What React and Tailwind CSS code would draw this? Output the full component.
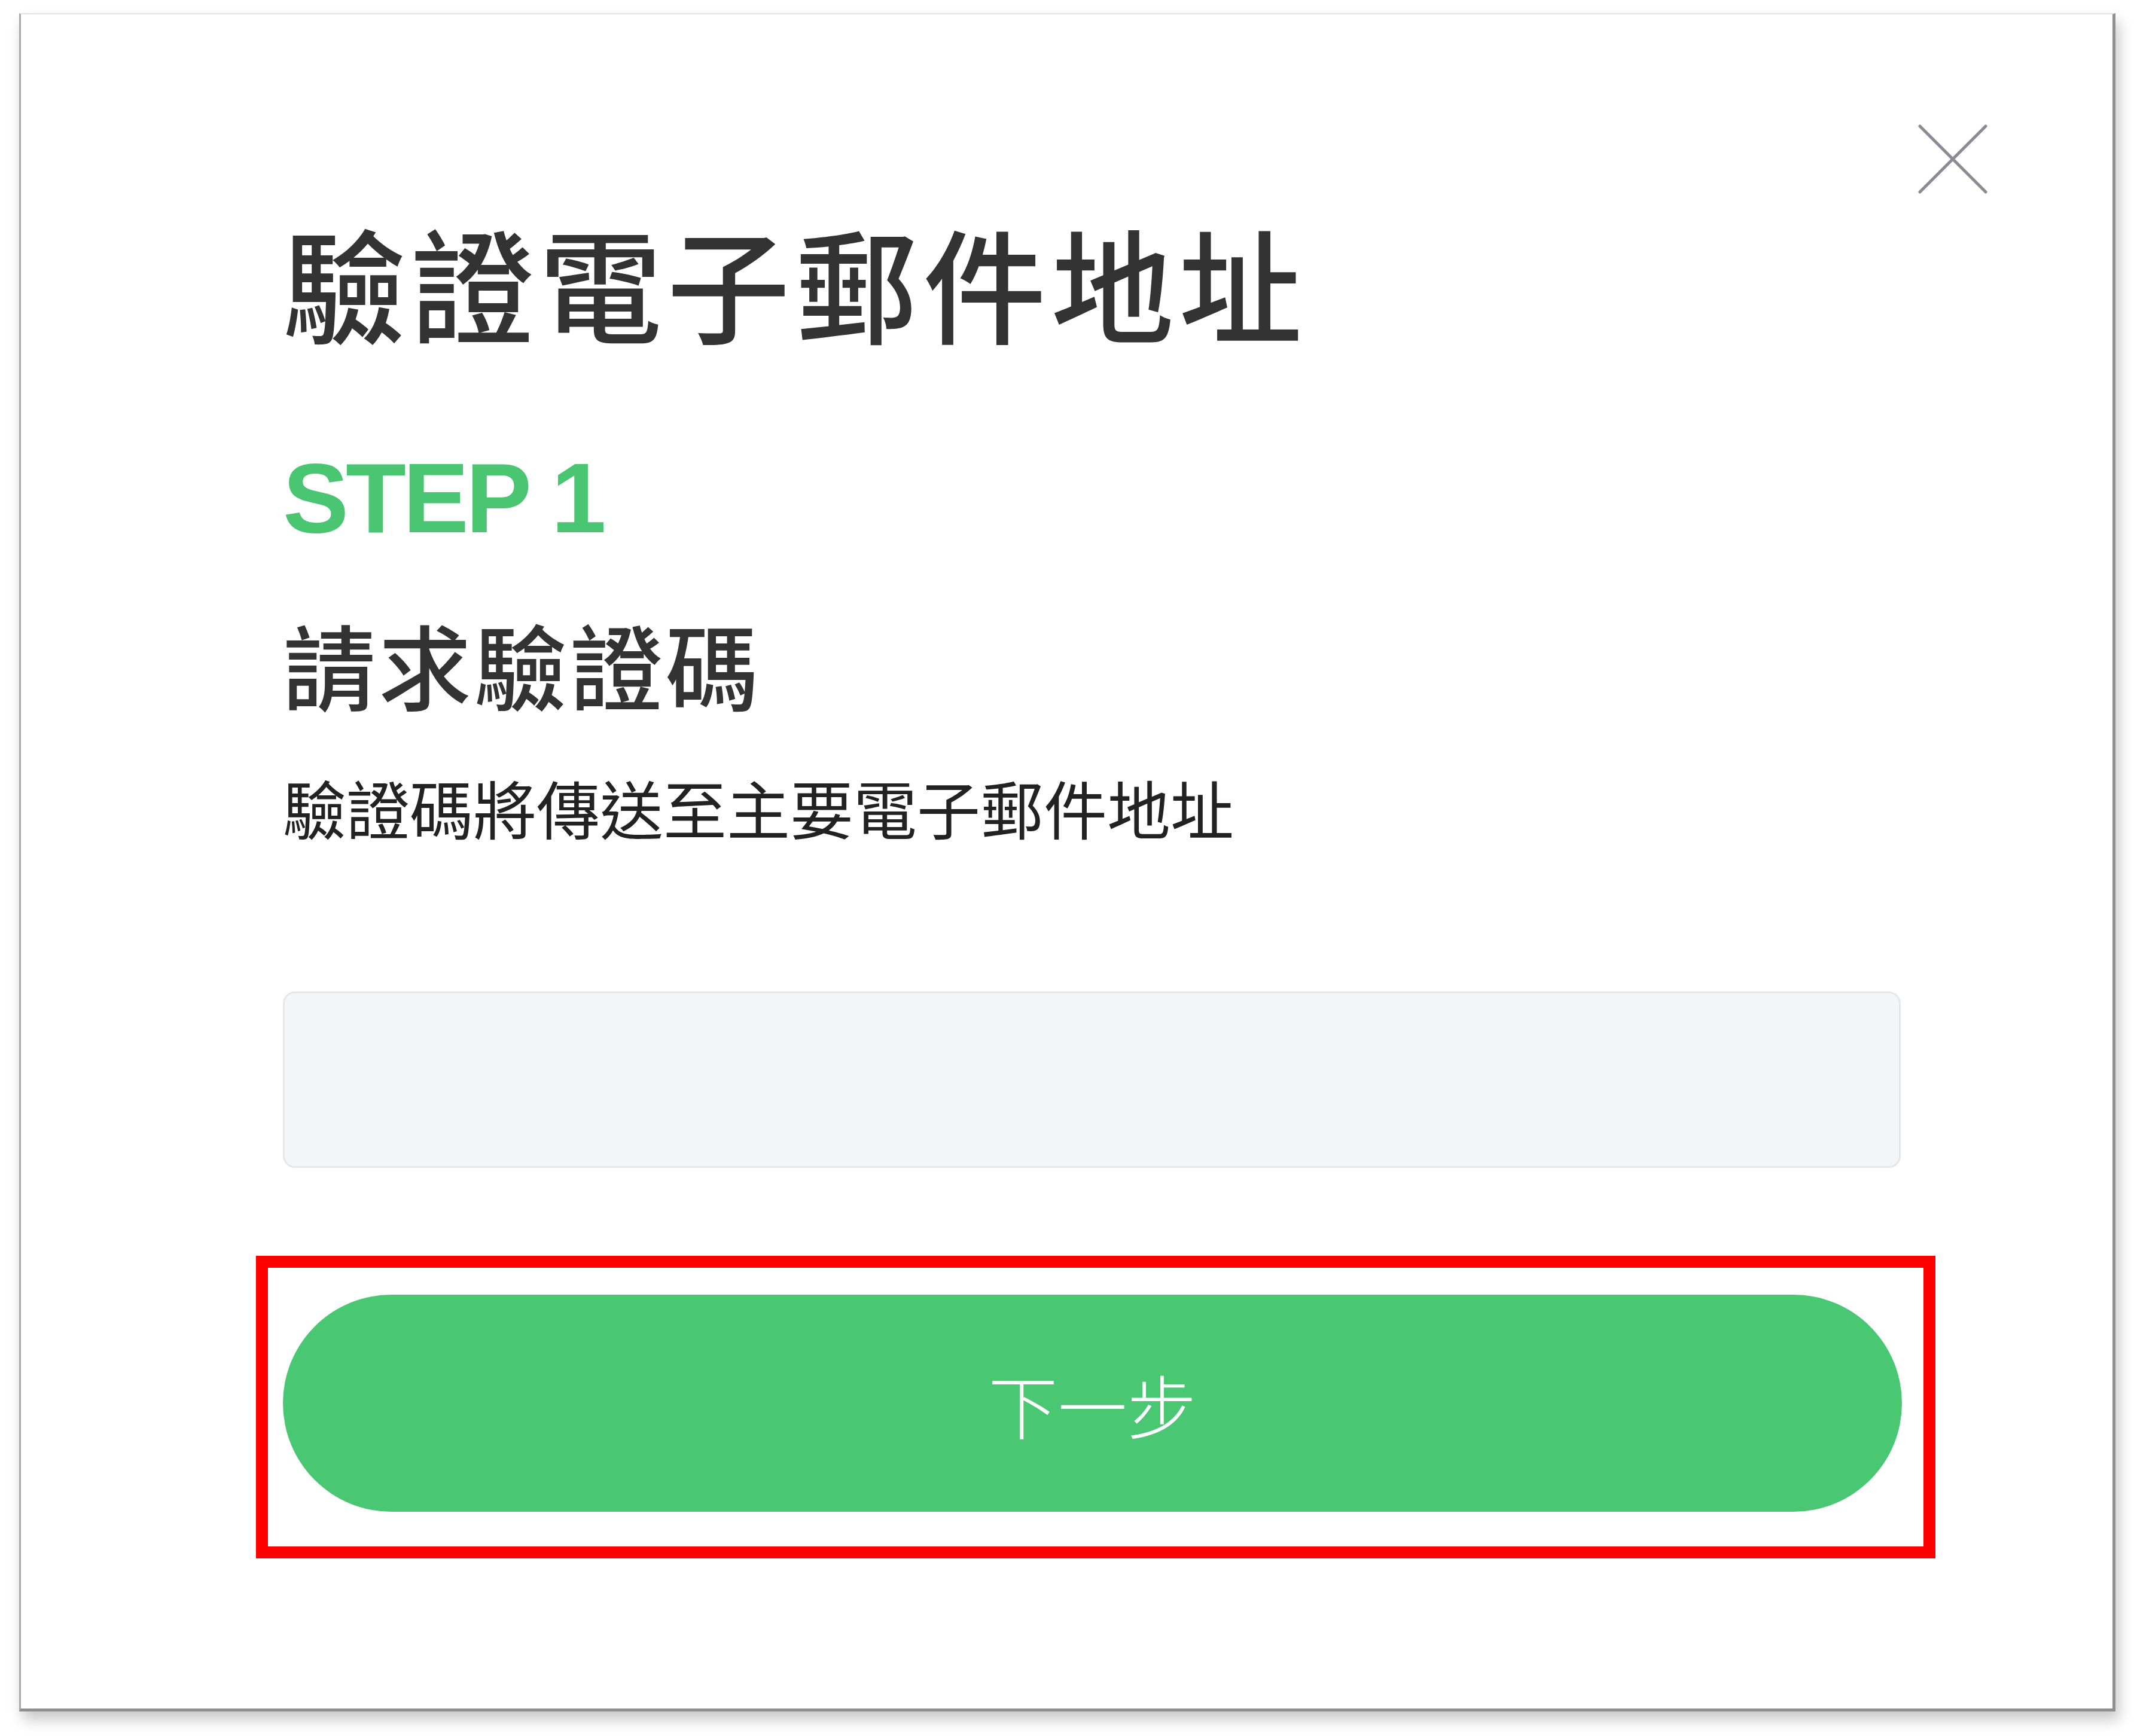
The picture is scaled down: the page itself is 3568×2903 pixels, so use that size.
import React, { useState } from 'react'

const cjk = '"Noto Sans CJK TC", "Noto Sans", sans-serif'
const latin = '"Liberation Sans", Arial, sans-serif'

function CloseIcon() {
  return (
    <svg width="118" height="118" viewBox="0 0 118 118" fill="none">
      <path d="M4 4L114 114M114 4L4 114" stroke="#8b8b95" strokeWidth="5" strokeLinecap="round" />
    </svg>
  )
}

export default function App() {
  const [code, setCode] = useState('')

  return (
    <div className="w-[3568px] h-[2903px] bg-white pt-[22px] pl-[32px]" style={{ fontFamily: cjk }}>
      {/* framed dialog */}
      <div className="relative w-[3505px] h-[2840px] bg-white border-l-[3px] border-t-[2px] border-r-[5px] border-b-[5px] border-l-[#a9a9a9] border-t-[#e2e2e2] border-r-[#8f8f8f] border-b-[#8f8f8f] shadow-[6px_14px_22px_rgba(0,0,0,0.22)]">
        <button type="button" className="absolute top-[183px] right-[208px]">
          <CloseIcon />
        </button>

        <div className="pl-[438px] pr-[324px] pt-[342px] flex flex-col">
          <h1 className="text-[206px] leading-none font-medium tracking-[8px] text-[#333333]">
            驗證電子郵件地址
          </h1>

          <div
            className="mt-[179px] text-[165px] leading-none font-bold tracking-[-5px] text-[#4ac672]"
            style={{ fontFamily: latin }}
          >
            STEP 1
          </div>

          <h2 className="mt-[115px] text-[155px] leading-none font-medium tracking-[5px] text-[#333333]">
            請求驗證碼
          </h2>

          <p className="mt-[110px] text-[106px] leading-none text-[#222222]">
            驗證碼將傳送至主要電子郵件地址
          </p>

          <input
            type="text"
            value={code}
            onChange={(e) => setCode(e.target.value)}
            className="mt-[256px] w-[2705px] h-[295px] rounded-[20px] bg-[#f4f5f9] border-[3px] border-[#e6e7eb] px-10 text-[100px] outline-none"
          />

          {/* highlighted action */}
          <div className="mt-[147px] -ml-[45px] w-[2808px] h-[506px] border-[20px] border-[#ff0000] pt-[45px] pl-[25px]">
            <button
              type="button"
              className="w-[2707px] h-[363px] rounded-full bg-[#49c773] text-white text-[116px] font-light flex items-center justify-center"
            >
              下一步
            </button>
          </div>
        </div>
      </div>
    </div>
  )
}
